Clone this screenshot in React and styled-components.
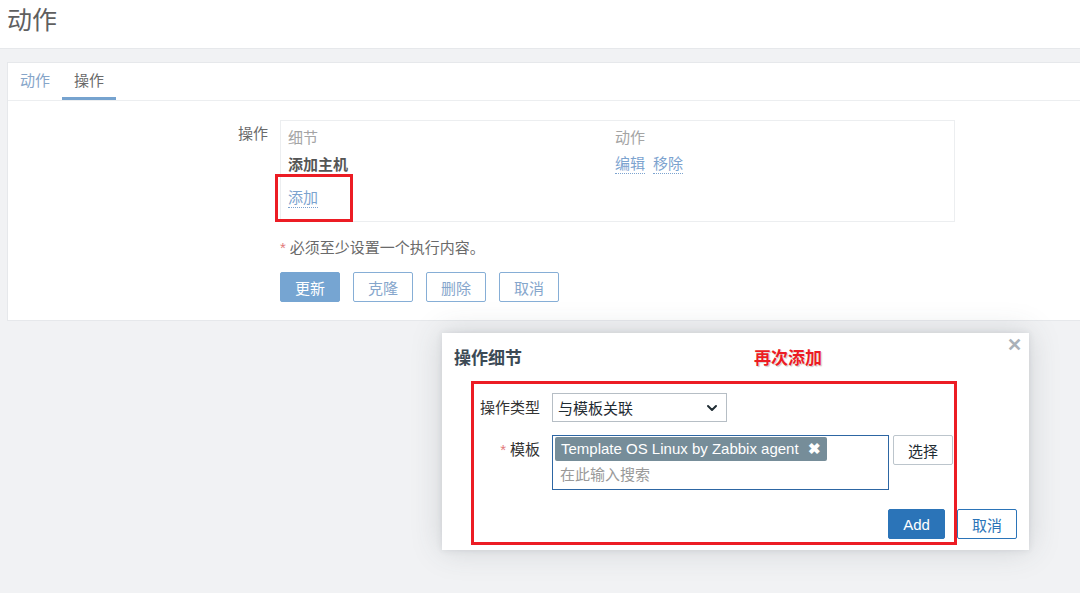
import React from 'react';
import styled, { createGlobalStyle } from 'styled-components';
import { ChevronDown } from 'lucide-react';

const GlobalStyle = createGlobalStyle`
  html, body {
    margin: 0;
    padding: 0;
    background: #f1f2f4;
    overflow: hidden;
  }
  body {
    font-family: "Liberation Sans", "Noto Sans CJK SC", sans-serif;
    font-size: 15px;
    color: #1f2c33;
  }
  * {
    box-sizing: border-box;
  }
`;

const Page = styled.div`
  position: relative;
  width: 1080px;
  height: 593px;
`;

const Header = styled.header`
  height: 49px;
  background: #fff;
  border-bottom: 1px solid #e6e8eb;
  padding: 4px 7px 0;
`;

const Title = styled.h1`
  margin: 0;
  font-size: 25px;
  font-weight: normal;
  line-height: 33px;
  color: #5f5f5f;
`;

const Main = styled.main`
  padding: 13px 0 0 7px;
`;

const Panel = styled.section`
  background: #fff;
  border: 1px solid #e6e8eb;
  margin-right: -10px;
  padding-bottom: 18px;
`;

const Tabs = styled.nav`
  display: flex;
  height: 38px;
  border-bottom: 1px solid #eceef0;
`;

const Tab = styled.div`
  padding: 0 12px;
  line-height: 35px;
  color: ${(p) => (p.active ? '#6a6a6a' : '#86a5c9')};
  border-bottom: 3px solid ${(p) => (p.active ? '#76a3cf' : 'transparent')};
`;

const FormGrid = styled.div`
  display: grid;
  grid-template-columns: 272px 675px;
  padding-top: 19px;
`;

const Label = styled.div`
  text-align: right;
  padding-right: 12px;
  color: #6a6a6a;
  line-height: 27px;
`;

const OpsTable = styled.div`
  position: relative;
  border: 1px solid #eceef0;
  padding: 3px 7px 13px;
`;

const OpsRow = styled.div`
  display: grid;
  grid-template-columns: 327px 1fr;
  line-height: 27px;
  color: ${(p) => (p.head ? '#a4a4a4' : '#555')};
  font-weight: ${(p) => (p.bold ? 'bold' : 'normal')};
`;

const LinkGroup = styled.div`
  display: flex;
  gap: 8px;
  align-items: center;
`;

const DottedLink = styled.span`
  color: #7ca3cf;
  line-height: 18px;
  border-bottom: 1px dotted #7ca3cf;
  font-weight: normal;
`;

const AddRow = styled.div`
  margin-top: 11px;
  line-height: 27px;
  display: flex;
`;

const Highlight = styled.div`
  position: absolute;
  border: 3px solid #ec1c24;
  left: ${(p) => p.left}px;
  top: ${(p) => p.top}px;
  width: ${(p) => p.w}px;
  height: ${(p) => p.h}px;
  pointer-events: none;
`;

const Note = styled.div`
  margin-top: 16px;
  line-height: 20px;
  color: #6a6a6a;
`;

const Star = styled.span`
  color: #e27a7a;
  margin-right: 4px;
`;

const ButtonRow = styled.div`
  display: flex;
  gap: 13px;
  margin-top: 14px;
`;

const Button = styled.button`
  font-family: inherit;
  font-size: 15px;
  height: 30px;
  width: ${(p) => p.w || 60}px;
  padding: 0;
  border-radius: 2px;
  cursor: pointer;
  border: 1px solid ${(p) => (p.primary ? p.bg || '#76a5d2' : p.border || '#86aed6')};
  background: ${(p) => (p.primary ? p.bg || '#76a5d2' : '#fff')};
  color: ${(p) => (p.primary ? '#fff' : p.fg || '#86a6cc')};
`;

const Dialog = styled.div`
  position: absolute;
  left: 442px;
  top: 333px;
  width: 587px;
  height: 217px;
  background: #fff;
  box-shadow: 0 0 30px rgba(60, 70, 80, 0.18), 0 0 6px rgba(60, 70, 80, 0.12);
  padding: 14px 12px 0;
`;

const DialogTitle = styled.h2`
  margin: 0;
  font-size: 17px;
  font-weight: bold;
  line-height: 24px;
  color: #3c4a55;
`;

const Close = styled.span`
  position: absolute;
  right: 7px;
  top: 1px;
  font-size: 18px;
  font-weight: bold;
  color: #a9b1b8;
`;

const Annotation = styled.div`
  position: absolute;
  left: 312px;
  top: 14px;
  font-size: 17px;
  font-weight: bold;
  color: #ec1c24;
  line-height: 24px;
  text-shadow: 0 0 2px #fff, 1px 1px 1px rgba(0, 0, 0, 0.25);
`;

const DialogForm = styled.div`
  display: grid;
  grid-template-columns: 98px auto;
  column-gap: 12px;
  row-gap: 13px;
  padding-top: 22px;
  margin-left: -12px;
  align-items: start;
`;

const DLabel = styled.div`
  text-align: right;
  line-height: 29px;
  color: #333;
`;

const Select = styled.div`
  width: 175px;
  height: 29px;
  border: 1px solid #b6bec5;
  display: flex;
  align-items: center;
  justify-content: space-between;
  padding: 0 6px 0 5px;
  color: #1f2c33;
`;

const MultiWrap = styled.div`
  display: flex;
  gap: 4px;
`;

const MultiSelect = styled.div`
  width: 337px;
  height: 55px;
  border: 1px solid #2d66a3;
  padding: 1px 2px;
`;

const Tag = styled.span`
  display: inline-flex;
  align-items: center;
  gap: 9px;
  height: 24px;
  padding: 0 6px;
  background: #768d99;
  color: #fff;
  border-radius: 2px;
  line-height: 24px;
`;

const TagClose = styled.span`
  font-size: 15px;
  font-weight: bold;
`;

const Placeholder = styled.div`
  padding-left: 5px;
  line-height: 27px;
  color: #9a9a9a;
`;

const DialogFooter = styled.div`
  display: flex;
  justify-content: flex-end;
  gap: 12px;
  margin-top: 19px;
`;

export default function App() {
  return (
    <Page>
      <GlobalStyle />
      <Header>
        <Title>动作</Title>
      </Header>
      <Main>
        <Panel>
          <Tabs>
            <Tab>动作</Tab>
            <Tab active>操作</Tab>
          </Tabs>
          <FormGrid>
            <Label>操作</Label>
            <div>
              <OpsTable>
                <OpsRow head>
                  <div>细节</div>
                  <div>动作</div>
                </OpsRow>
                <OpsRow bold>
                  <div>添加主机</div>
                  <LinkGroup>
                    <DottedLink>编辑</DottedLink>
                    <DottedLink>移除</DottedLink>
                  </LinkGroup>
                </OpsRow>
                <AddRow>
                  <DottedLink>添加</DottedLink>
                </AddRow>
                <Highlight left={-6} top={53} w={78} h={48} />
              </OpsTable>
              <Note>
                <Star>*</Star>必须至少设置一个执行内容。
              </Note>
              <ButtonRow>
                <Button primary>更新</Button>
                <Button>克隆</Button>
                <Button>删除</Button>
                <Button>取消</Button>
              </ButtonRow>
            </div>
          </FormGrid>
        </Panel>
      </Main>

      <Dialog>
        <DialogTitle>操作细节</DialogTitle>
        <Close>✕</Close>
        <Annotation>再次添加</Annotation>
        <Highlight left={29} top={48} w={486} h={164} />
        <DialogForm>
          <DLabel>操作类型</DLabel>
          <Select>
            <span>与模板关联</span>
            <ChevronDown size={16} strokeWidth={3} color="#1f2c33" />
          </Select>
          <DLabel>
            <Star>*</Star>模板
          </DLabel>
          <MultiWrap>
            <MultiSelect>
              <Tag>
                Template OS Linux by Zabbix agent
                <TagClose>✖</TagClose>
              </Tag>
              <Placeholder>在此输入搜索</Placeholder>
            </MultiSelect>
            <Button border="#bcc5cc" fg="#1f2c33">选择</Button>
          </MultiWrap>
        </DialogForm>
        <DialogFooter>
          <Button primary bg="#2b74b8" w={57}>Add</Button>
          <Button border="#2b74b8" fg="#2b74b8">取消</Button>
        </DialogFooter>
      </Dialog>
    </Page>
  );
}
